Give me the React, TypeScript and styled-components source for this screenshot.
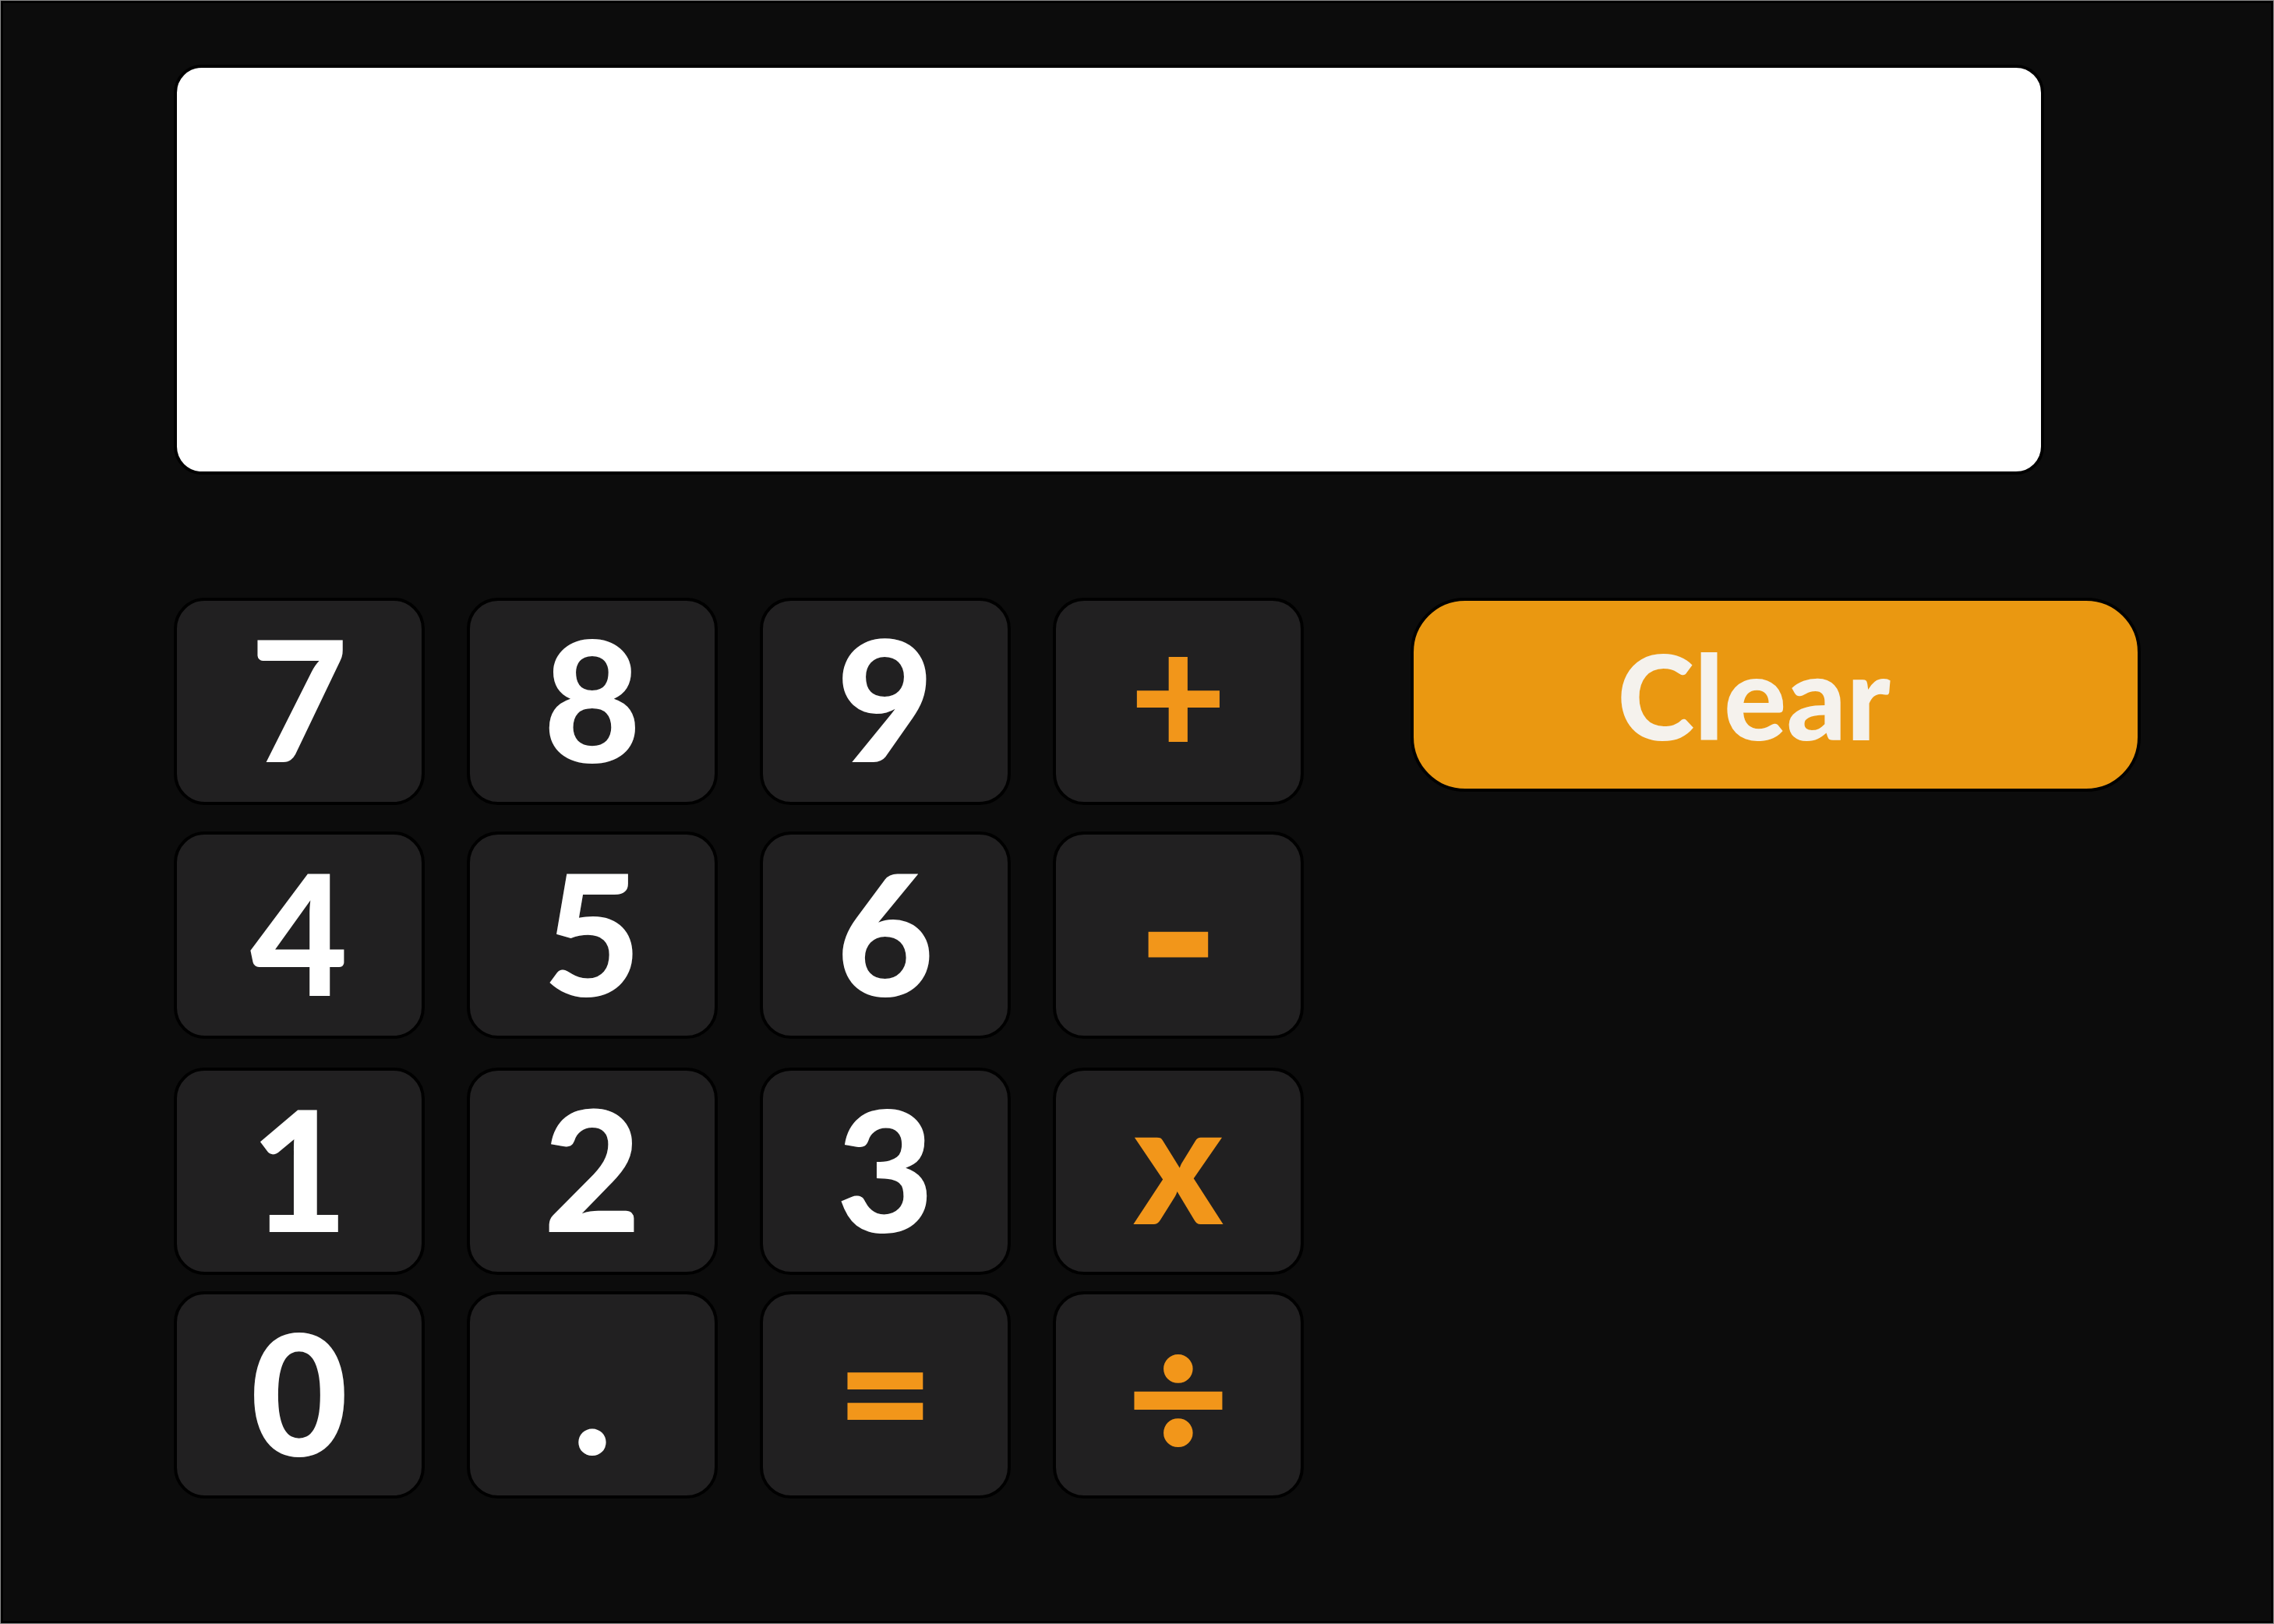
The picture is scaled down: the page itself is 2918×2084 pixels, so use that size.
import * as React from 'react';
import styled, { createGlobalStyle } from 'styled-components';

interface KeyProps {
  label: string;
  op?: boolean;
  size?: number;
  shift?: number;
}

const GlobalStyle = createGlobalStyle`
  html, body {
    margin: 0;
    padding: 0;
    background: #0c0c0c;
  }
  * {
    box-sizing: border-box;
  }
`

const Frame = styled.div`
  width: 2918px;
  height: 2084px;
  border: 1px solid #8c8c8c;
`

const Screen = styled.div`
  height: 100%;
  border: 3px solid #000;
  background: #0c0c0c;
  padding: 79px 0 0 219px;
`

const Display = styled.div`
  width: 2400px;
  height: 526px;
  background: #fff;
  border: 4px solid #000;
  border-radius: 36px;
`

const Body = styled.div`
  display: flex;
  align-items: flex-start;
  margin-top: 158px;
`

const Keypad = styled.div`
  display: flex;
  flex-direction: column;
`

const Row = styled.div<{ $gap: number }>`
  display: grid;
  grid-template-columns: repeat(4, 322px);
  column-gap: 54px;
  margin-top: ${props => props.$gap}px;
`

const Key = styled.button<{ $op?: boolean, $size?: number, $shift?: number }>`
  display: flex;
  align-items: center;
  justify-content: center;
  width: 322px;
  height: 266px;
  padding: 0 0 ${props => props.$shift ?? 10}px 0;
  background: #212021;
  border: 4px solid #000;
  border-radius: 40px;
  color: ${props => props.$op ? '#f2961a' : '#ffffff'};
  font-family: Lato, "Liberation Sans", sans-serif;
  font-weight: 900;
  font-size: ${props => props.$size ?? 216}px;
  line-height: 1;
  cursor: pointer;
`

const ClearButton = styled.button`
  display: flex;
  align-items: center;
  justify-content: center;
  width: 937px;
  height: 249px;
  margin-left: 137px;
  padding: 0 56px 0 0;
  background: #ea9811;
  border: 4px solid #000;
  border-radius: 70px;
  color: #f5f2ed;
  font-family: Lato, "Liberation Sans", sans-serif;
  font-weight: 900;
  font-size: 150px;
  line-height: 1;
  cursor: pointer;
`

const rows: Array<{ gap: number, keys: KeyProps[] }> = [
  { gap: 0, keys: [{ label: '7' }, { label: '8' }, { label: '9' }, { label: '+', op: true, shift: 26 }] },
  { gap: 34, keys: [{ label: '4' }, { label: '5' }, { label: '6' }, { label: '-', op: true, size: 290, shift: 24 }] },
  { gap: 37, keys: [{ label: '1' }, { label: '2' }, { label: '3' }, { label: 'x', op: true, shift: 30 }] },
  { gap: 21, keys: [{ label: '0' }, { label: '.', shift: 14 }, { label: '=', op: true, shift: 18 }, { label: '÷', op: true, size: 230, shift: 8 }] },
];

const App = () => {
  const [value, setValue] = React.useState('');
  return (
    <Frame>
      <GlobalStyle />
      <Screen>
        <Display aria-label={value} />
        <Body>
          <Keypad>
            {rows.map((row, i) =>
              <Row key={i} $gap={row.gap}>
                {row.keys.map(item =>
                  <Key
                    key={item.label}
                    $op={item.op}
                    $size={item.size}
                    $shift={item.shift}
                    onClick={() => setValue(value + item.label)}
                  >
                    {item.label}
                  </Key>
                )}
              </Row>
            )}
          </Keypad>
          <ClearButton onClick={() => setValue('')}>Clear</ClearButton>
        </Body>
      </Screen>
    </Frame>
  );
}

export default App
